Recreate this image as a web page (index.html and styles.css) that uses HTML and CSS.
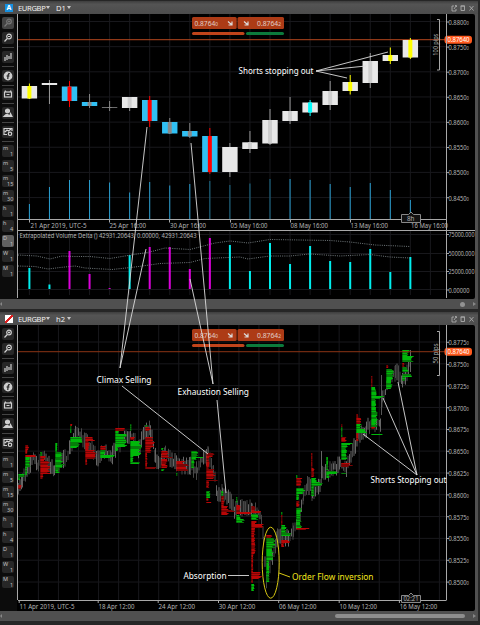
FILE: index.html
```html
<!DOCTYPE html>
<html lang="en">

<head>
    <meta charset="UTF-8">
    <title>EURGBP</title>
    <link rel="stylesheet" href="styles.css">
</head>

<body>
    <div class="wrapper">
        <div class="panel">
            <div class="header">
                <span class="logo">A</span>
                <span class="symbol">EURGBP</span>
                <span class="caret"></span>
                <span class="period">D1</span>
                <span class="caret"></span>
                <svg class="win" viewBox="0 0 24 8">
                    <path d="M3 2H1v5h4V5M3 5l2-3M4 1.500h1.500V3" />
                    <path d="M10 2h3.500v4.500H10zM9.600 2h4.300" />
                    <path d="M18.500 2l4 4.500M22.500 2l-4 4.500" />
                </svg>
            </div>
            <div class="main">
                <div class="tools" data-active="D1" data-dim="1"></div>
                <svg class="chart" id="day" viewBox="17 14 458 285"></svg>
            </div>
            <div class="scroll">
                <span class="left"></span>
                <span class="dot"></span>
                <span class="right"></span>
            </div>
        </div>
        <div class="panel second">
            <div class="header">
                <span class="logo slash"></span>
                <span class="symbol">EURGBP</span>
                <span class="caret"></span>
                <span class="period">h2</span>
                <span class="caret"></span>
                <svg class="win" viewBox="0 0 24 8">
                    <path d="M3 2H1v5h4V5M3 5l2-3M4 1.500h1.500V3" />
                    <path d="M10 2h3.500v4.500H10zM9.600 2h4.300" />
                    <path d="M18.500 2l4 4.500M22.500 2l-4 4.500" />
                </svg>
            </div>
            <div class="main">
                <div class="tools"></div>
                <svg class="chart" id="hours" viewBox="17 325 458 286"></svg>
            </div>
            <div class="scroll">
                <span class="left"></span>
                <span class="thumb"></span>
                <span class="right"></span>
            </div>
        </div>
        <svg class="notes" id="notes" viewBox="0 0 480 625"></svg>
    </div>
    <script src="chart.js"></script>
</body>

</html>
```

FILE: styles.css
```css
* {
    box-sizing: border-box;
}

body {
    margin: 0px;
    background: #262626;
    font-family: "Noto Sans", "Open Sans", sans-serif;
}

.wrapper {
    position: relative;
    width: 480px;
    height: 625px;
    padding-top: 1px;
    overflow: hidden;
    background: #262626;
}

.panel {
    display: flex;
    flex-direction: column;
    width: 478px;
    height: 308px;
    background: #505050;
}

.second {
    height: 309px;
    margin-top: 3px;
}

.header {
    display: flex;
    align-items: center;
    height: 13px;
    padding: 0 3px 0 5px;
    background: linear-gradient(#3e3e3e, #545454 25%, #4c4c4c);
    color: #f0f0f0;
    font-size: 7.6px;
    line-height: 12px;
}

.logo {
    width: 8px;
    height: 8px;
    margin-right: 5px;
    background: #1690e0;
    color: #fff;
    font-size: 7px;
    font-weight: bold;
    line-height: 8px;
    text-align: center;
}

.slash {
    background: linear-gradient(135deg, #fff 42%, #e02020 42%, #e02020 58%, #fff 58%);
}

.symbol {
    width: 26px;
    letter-spacing: -0.35px;
}

.period {
    width: 9px;
}

.caret {
    margin: 0 6px 0 2px;
    border: 2px solid transparent;
    border-top: 3px solid #c8c8c8;
    border-bottom: 0;
}

.win {
    width: 24px;
    height: 8px;
    margin-left: auto;
    fill: none;
    stroke: #aaa;
    stroke-width: 0.9;
}

.main {
    display: flex;
    flex: 1;
    min-height: 0;
}

.tools {
    display: flex;
    flex-direction: column;
    width: 17px;
    padding: 3px 0 0 2px;
    background: #0c0c0c;
}

.btn {
    flex: none;
    width: 12px;
    height: 12px;
    margin-bottom: 3px;
    border-radius: 2px;
    background: #272727;
    fill: none;
    stroke: #cfcfcf;
    stroke-width: 1.2;
}

.btn text {
    fill: #c4c4c4;
    stroke: none;
    font-size: 5.5px;
}

.btn.on {
    background: #606060;
}

.btn.dim {
    background: #444;
    stroke: #777;
}

.sep {
    flex: none;
    width: 12px;
    height: 0.8px;
    margin-bottom: 3px;
    background: #444;
}

.chart {
    display: block;
    width: 458px;
    height: 100%;
    background: #000;
    border-radius: 0 2px 2px 0;
}

.scroll {
    display: flex;
    align-items: center;
    justify-content: flex-end;
    height: 10px;
    padding-right: 2px;
    background: #505050;
}

.left,
.right {
    border: 2px solid transparent;
}

.left {
    margin-right: auto;
    border-right: 2.5px solid #888;
    border-left: 0;
}

.right {
    border-left: 3px solid #888;
    border-right: 0;
}

.dot {
    width: 5px;
    height: 5px;
    margin-right: 8px;
    border-radius: 50%;
    background: #929292;
}

.thumb {
    width: 130px;
    height: 4px;
    margin-right: 8px;
    border-radius: 2px;
    background: #8e8e8e;
}

.notes {
    position: absolute;
    top: 0;
    left: 0;
    width: 480px;
    height: 625px;
    pointer-events: none;
}

.label {
    fill: #b4b4b4;
    font-size: 7px;
}

.price {
    fill: #e0cfc8;
    font-size: 7px;
}

.last {
    font-size: 5px;
}

.note {
    fill: #fff;
    font-size: 9px;
}

.note.yellow {
    fill: #f2e61c;
}

.grid {
    stroke: #18181c;
}

.axis {
    stroke: #a8a8a8;
    fill: none;
}

.dots {
    fill: none;
    stroke: #8d979b;
    stroke-dasharray: 1 1.2;
    stroke-width: 0.8;
}

.lines {
    fill: none;
    stroke: #dcdcdc;
    stroke-width: 0.9;
}
```

FILE: chart.js
```javascript
var NS = 'http://www.w3.org/2000/svg';

function add(parent, tag, attrs, text) {
    var el = document.createElementNS(NS, tag);
    for (var k in attrs) {
        el.setAttribute(k, attrs[k]);
    }
    if (text) el.textContent = text;
    parent.appendChild(el);
    return el;
}
function rect(p, x, y, w, h, fill, rx) {
    return add(p, 'rect', { x: x, y: y, width: w, height: h, fill: fill, rx: rx || 0 });
}
function path(p, d, cls) {
    return add(p, 'path', { d: d, 'class': cls });
}
function text(p, x, y, s, cls, len) {
    var a = { x: x, y: y, 'class': cls };
    if (len) {
        a.textLength = len;
        a.lengthAdjust = 'spacingAndGlyphs';
    }
    return add(p, 'text', a, s);
}
// price with a small last digit
function pipText(p, x, y, s, last, cls, len) {
    var t = text(p, x, y, s, cls, len);
    add(t, 'tspan', { 'class': 'last' }, last);
}

// toolbar buttons
var zoomIcon = '<circle cx="7" cy="4.5" r="2.3"/><path d="M5.3 6.5L2.5 9.5M6 4.5h2"/>';
var icons = [
    zoomIcon + '<path d="M7 3.5v2"/>',
    zoomIcon,
    '|<path d="M3 6v4M5 4v5M7 5v3M9 2v6"/>',
    '|<circle cx="6" cy="6" r="3.8" fill="#cfcfcf"/><path stroke="#222" d="M7.8 3.8C6 3.3 6 4.5 5.8 9M4.5 6h3"/>',
    '|<rect x="2.5" y="4" width="7" height="5"/><path d="M3 2.500l1 1.500M9 2.500L8 4M4.500 6.500h3"/>',
    '|<circle cx="5.5" cy="4" r="2" fill="#cfcfcf"/><path fill="#cfcfcf" d="M2 9.500l2-2h2l1 2zM7.500 9.500l1-3 1.500 3z"/>',
    '|<path d="M10 5V2.500H2v6h3M3 6l2-2 1.500 1L9 3"/><circle cx="8" cy="7.8" r="1.7"/>',
    '|m1', 'm5', 'm15', 'm30', 'h1', 'h4', 'D1', 'W1', 'M1'
];
document.querySelectorAll('.tools').forEach(function (box) {
    icons.forEach(function (ic, i) {
        if (ic[0] == '|') {
            var s = document.createElement('div');
            s.className = 'sep';
            box.appendChild(s);
            ic = ic.slice(1);
        }
        var b = add(box, 'svg', { viewBox: '0 0 12 12', 'class': 'btn' });
        if (ic[0] == '<') {
            b.innerHTML = ic;
        } else {
            text(b, 1, 5, ic[0], '');
            text(b, 8 - (ic.length - 2) * 3, 10.5, ic.slice(1), '');
        }
        if (ic == box.dataset.active) b.classList.add('on');
        if (i == 0 && box.dataset.dim) b.classList.add('dim');
    });
});

function axisLabel(p, y, s) {
    path(p, 'M446 ' + y + 'h3', 'axis');
    pipText(p, 448.5, y + 2.8, s, '0', 'label', 20.5);
}

// sell / buy boxes, orange price line and pip scale
function quote(p, dy, lineY, pips, bottom, lineColor) {
    rect(p, 18, lineY - 0.5, 428, 1, lineColor);
    rect(p, 444.5, lineY - 4, 27.5, 8, '#ff5a1e', 3);
    text(p, 447.5, lineY + 2.7, '0.87640', 'price', 22).style.fill = '#fff';
    rect(p, 192, 17 + dy, 44.7, 12, '#ad3b16', 1.5);
    rect(p, 237.5, 17 + dy, 46.5, 12, '#ad3b16', 1.5);
    pipText(p, 194.5, 25.5 + dy, '0.8764', '0', 'price', 23.5);
    pipText(p, 257, 25.5 + dy, '0.8764', '2', 'price', 24);
    [228, 244].forEach(function (x) {
        var a = path(p, 'M' + x + ' ' + (21.5 + dy) + 'l3.5 3M' + (x + 4) + ' ' + (21.5 + dy) + 'v3.5h-3.5', 'lines');
        a.style.strokeWidth = 1.2;
    });
    rect(p, 192, 32 + dy, 52.5, 3, '#c0441b', 1.5);
    rect(p, 246, 32 + dy, 38, 3, '#0b7a3c', 1.5);
    var top = 19.5 + dy;
    path(p, 'M437 ' + top + 'h2.5V' + bottom + 'h-2.5', 'axis');
    var ty = (top + bottom) / 2 + (pips == '100 pips' ? 11 : 10);
    var t = text(p, 0, 0, pips, 'label', pips == '100 pips' ? 22 : 20);
    t.setAttribute('transform', 'translate(437.5 ' + ty + ') rotate(-90)');
}

function timeTag(p, y, h, s, x, len) {
    add(p, 'path', {
        d: 'M401.5 ' + y + 'h7l2.5-2.5 2.5 2.5h7v' + h + 'h-19z',
        fill: '#111', stroke: '#999', 'stroke-width': 0.9
    });
    text(p, x, y + h - 1.5, s, 'label', len);
}

// ---- daily chart ----
var day = document.getElementById('day');
var STEP = 20.05;
var i, x;
for (i = 0; i < 21; i++) {
    path(day, 'M' + (29.4 + i * STEP) + ' 14V219M' + (29.4 + i * STEP) + ' 231V295', 'grid');
}
for (i = 0; i < 8; i++) {
    path(day, 'M18 ' + (21.5 + i * 25.15) + 'H446', 'grid');
}
[234.5, 253.5, 271.5, 289.5].forEach(function (y) {
    path(day, 'M18 ' + y + 'H446', 'grid');
});

// body top, body bottom, high, low, body, core, volume top, delta top, delta color
var W = '#e8e8e8', B = '#30c0f4', G = '#888', L = '#cfcfcf', C = '#00eeee', M = '#dc00dc';
var candles = [
    [86, 98.5, 83.5, 99, W, '#ff0', 204, 268, C],
    [83, 85, 80, 104, W, W, 187, 284.5, C],
    [86.5, 101, 81, 107, B, '#f00', 180, 251, M],
    [102, 106, 94, 108, B, G, 180, 274, M],
    [107, 107.8, 101, 111, G, G, 182.5, 288, M],
    [97, 108, 97, 111, W, L, 192.5, 255, C],
    [100, 121, 96, 127, B, '#f00', 182, 247, M],
    [122, 133.5, 118, 134, B, G, 185.5, 247, M],
    [131, 136.5, 123, 138, B, G, 184, 269, M],
    [136, 172, 128, 174, B, '#f00', 181, 238, M],
    [147, 172, 143, 177, W, W, 185, 245, C],
    [142.3, 149, 131, 153, W, L, 183.5, 271, C],
    [120, 143.5, 109, 145, W, L, 179, 243, C],
    [111, 121, 97, 124, W, L, 179, 264, C],
    [102.5, 112.5, 100, 116, W, '#0ff', 180, 246, C],
    [91, 105, 81, 110, W, L, 184, 261, C],
    [82, 91, 75, 94.5, W, '#ff0', 187, 262, C],
    [61, 83, 53, 88, W, L, 183, 249, C],
    [55, 61, 47.5, 64, W, '#ff0', 190, 272, C],
    [40, 57.5, 38, 59, W, '#ff0', 200, 257, C]
];
quote(day, 0, 39.7, '100 pips', 70, '#b5471f');
candles.forEach(function (c, n) {
    x = 29.4 + n * STEP;
    rect(day, x - 0.5, c[6], 1, 219 - c[6], n > 8 && n < 13 ? '#1d708f' : '#2ba0d2');
    var wick = c[5] == L || c[5] == W ? '#999' : c[5];
    rect(day, x - 0.5, c[2], 1, c[3] - c[2], wick);
    rect(day, x - 7.7, c[0], 15.4, c[1] - c[0], c[4]);
    rect(day, x - 2, c[0], 4, c[1] - c[0], c[5]);
    rect(day, x - 1, c[7], 2, 289 - c[7], c[8]);
});
path(day, 'M18 219.5H446.5M18 230.5H475M446.5 14V298M17.5 14V298', 'axis');
['0.8800', '0.8750', '0.8700', '0.8650', '0.8600', '0.8550', '0.8500', '0.8450'].forEach(function (s, n) {
    axisLabel(day, 22 + n * 25.1, s);
});
[['75000.000', 234.5, 26], ['50000.000', 253.5, 26], ['25000.000', 271.5, 26], ['0.00000', 290, 21]].forEach(function (a) {
    path(day, 'M446 ' + a[1] + 'h3', 'axis');
    text(day, 448.5, a[1] + 2.5, a[0], 'label', a[2]);
});
[[30.5, '21 Apr 2019, UTC-5', 56], [109.5, '25 Apr 16:00', 36.5], [170, '30 Apr 16:00', 36], [230.5, '05 May 16:00', 37],
    [290.5, '08 May 16:00', 37.5], [350.5, '13 May 16:00', 37.5], [411, '16 May 16:00', 37]].forEach(function (a, n) {
    path(day, 'M' + [29.5, 109.5, 169.5, 230.5, 290.5, 350.5, 411][n] + ' 220v2.5', 'axis');
    text(day, a[0], 228, a[1], 'label', a[2]);
});
text(day, 19.5, 238, 'Extrapolated Volume Delta () 42931.20643, 0.00000, 42931.20643', 'label', 177);
path(day, 'M18 255L37 256 50 259 62 256 75 256.5 90 256.5 110 258.5 125 256 150 252 165 248 190 249.5 215 243 230 241 248 243 270 239.5 330 240.5 350 242 375 245 410 246.5', 'dots');
path(day, 'M18 266L35 266.5 48 269 60 267.5 75 266 85 268 112 269.5 135 267 160 263.5 190 262.5 205 258.5 240 257 248 259 270 256 290 256 310 254 340 256 370 254.5 390 257 410 258', 'dots');
timeTag(day, 214.5, 8, '8h', 407, 7.5);

// ---- 2 hour chart ----
var hours = document.getElementById('hours');
for (i = 0; i < 21; i++) {
    path(hours, 'M' + (38.4 + i * STEP) + ' 325V600', 'grid');
}
for (i = 0; i < 12; i++) {
    path(hours, 'M18 ' + (342 + i * 21.82) + 'H446', 'grid');
}
var seed = 7;
function rnd() {
    seed = (seed * 16807) % 2147483647;
    return seed / 2147483647;
}

// price bars
var price = [[18, 485], [22, 480], [27, 470], [33, 457], [38, 466], [44, 455], [50, 468], [54, 470], [60, 460], [66, 458],
    [70, 445], [75, 435], [78, 432], [84, 440], [90, 448], [98, 458], [104, 452], [112, 455], [118, 445], [124, 436],
    [130, 434], [138, 450], [143, 433], [150, 430], [155, 455], [158, 465], [165, 455], [170, 460], [180, 466], [190, 466],
    [197, 471], [203, 456], [208, 456], [213, 470], [217, 493], [222, 491], [228, 497], [234, 510], [245, 507], [252, 510],
    [258, 513], [261, 520], [263, 540], [266, 580], [268, 568], [272, 556], [277, 538], [282, 535], [288, 540], [293, 530],
    [298, 520], [303, 498], [307, 483], [312, 492], [318, 487], [322, 475], [328, 473], [333, 467], [340, 465], [346, 469],
    [352, 452], [358, 436], [366, 428], [373, 424], [380, 422], [382, 398], [390, 380], [395, 371], [402, 380], [408, 370], [410, 357]];
for (i = 0; i < price.length - 1; i++) {
    var a = price[i], b = price[i + 1];
    for (x = a[0]; x < b[0]; x += 1.5) {
        var y = a[1] + (b[1] - a[1]) * (x - a[0]) / (b[0] - a[0]);
        var up = 2 + rnd() * 8, down = 2 + rnd() * 8;
        rect(hours, x, y - up, 1, up + down, rnd() > 0.5 ? '#666' : '#474747');
    }
}
rect(hours, 321, 451, 1, 27, '#666');
rect(hours, 381, 375, 1, 40, '#555');
rect(hours, 410, 350, 1, 22, '#666');

// volume profiles: x, then [from, to, color, width]
var profiles = [
    [18, [474, 477, 'g', 7], [477, 480, 'g', 2], [485, 489, 'r', 3]],
    [25, [445, 450, 'r', 4], [450, 454, 'r', 2], [455, 457, 'r', 12], [457, 467, 'g', 5], [467, 475, 'g', 2]],
    [40, [452, 456, 'g', 2], [456, 461, 'r', 5], [461, 474, 'r', 10], [474, 479, 'r', 3]],
    [55, [443, 452, 'g', 2], [452, 464, 'g', 7], [464, 468, 'g', 9], [468, 473, 'g', 4]],
    [70, [424, 426, 'r', 2], [426, 433, 'g', 1], [437, 443, 'g', 12], [443, 448, 'g', 9]],
    [85, [437, 441, 'r', 10], [441, 450, 'r', 4], [450, 459, 'r', 11], [459, 465, 'r', 2]],
    [100, [446, 450, 'r', 6], [450, 455, 'g', 5], [455, 458, 'g', 14]],
    [115, [428, 431, 'r', 11], [431, 434, 'g', 4], [434, 447, 'g', 11], [447, 451, 'g', 3]],
    [130, [424, 431, 'g', 1], [437, 440, 'r', 5], [441, 456, 'g', 11], [456, 462, 'g', 3], [462, 464, 'g', 9]],
    [145, [425, 427, 'g', 2], [427, 431, 'r', 5], [437, 447, 'r', 9], [447, 453, 'r', 6], [453, 467, 'r', 2], [467, 469, 'r', 13]],
    [161, [448, 450, 'g', 2], [451, 457, 'r', 7], [457, 458, 'r', 13], [459, 468, 'r', 6], [469, 471, 'g', 3]],
    [176, [461, 464, 'r', 8], [464, 471, 'r', 12], [473, 476, 'g', 1]],
    [191, [451, 457, 'g', 7], [457, 458, 'g', 13], [458, 460, 'g', 6], [460, 468, 'g', 3]],
    [206, [453, 457, 'r', 8], [457, 469, 'r', 3], [469, 479, 'r', 9], [480, 481, 'r', 13], [481, 488, 'r', 3], [491, 498, 'g', 4], [498, 501, 'r', 2], [502, 503, 'r', 6]],
    [221, [491, 496, 'g', 2], [496, 506, 'r', 3], [506, 510, 'r', 7], [510, 512, 'r', 13], [512, 515, 'r', 7]],
    [236, [497, 503, 'g', 1], [505, 512, 'r', 4], [512, 514, 'r', 15], [515, 519, 'g', 4], [519, 523, 'g', 8]],
    [251, [506, 511, 'r', 4], [511, 513, 'r', 10], [514, 520, 'g', 7], [521, 524, 'r', 5], [524, 528, 'r', 13], [528, 540, 'r', 4], [540, 554, 'r', 4], [554, 572, 'r', 2], [572, 579, 'r', 9], [576, 577, 'r', 11], [579, 583, 'r', 2], [584, 591, 'g', 3]],
    [266, [535, 538, 'r', 6], [538, 548, 'g', 9], [548, 560, 'g', 7], [560, 571, 'g', 3], [571, 582, 'g', 3]],
    [281, [512, 515, 'g', 1], [515, 525, 'r', 1], [525, 533, 'g', 5], [533, 536, 'g', 11], [540, 543, 'r', 8], [543, 547, 'r', 3]],
    [296, [475, 478, 'g', 1], [478, 486, 'r', 6], [488, 494, 'g', 9], [494, 500, 'g', 3], [501, 507, 'r', 3], [508, 510, 'g', 7], [510, 526, 'g', 5], [526, 528, 'g', 6], [528, 530, 'r', 13]],
    [311, [453, 468, 'r', 1], [468, 477, 'r', 3], [478, 482, 'g', 5], [482, 486, 'g', 11], [486, 496, 'g', 3]],
    [326, [457, 470, 'g', 2], [471, 474, 'g', 12], [474, 478, 'g', 3]],
    [341, [424, 427, 'r', 1], [427, 437, 'g', 1], [437, 442, 'r', 5], [443, 445, 'g', 11], [445, 453, 'g', 6], [453, 460, 'g', 6], [463, 467, 'r', 9], [465, 466, 'r', 13], [473, 474, 'g', 5]],
    [356, [414, 418, 'r', 2], [418, 424, 'r', 5], [424, 429, 'g', 5], [429, 433, 'g', 11], [433, 441, 'r', 2]],
    [371, [376, 387, 'r', 1], [387, 396, 'g', 5], [396, 399, 'g', 12], [399, 411, 'g', 5], [411, 427, 'g', 6], [427, 429, 'r', 4], [434, 435, 'g', 11]],
    [386, [365, 368, 'r', 2], [369, 379, 'g', 8], [379, 389, 'g', 6]],
    [402, [350, 356, 'g', 7], [356, 362, 'g', 11], [363, 367, 'r', 2], [367, 372, 'g', 6], [374, 377, 'g', 12], [377, 381, 'g', 3]]
];
profiles.forEach(function (p) {
    p.slice(1).forEach(function (s) {
        for (var y = s[0]; y < s[1]; y++) {
            var w = s[3] * (0.7 + rnd() * 0.35);
            var bright = rnd() > 0.45;
            var fill = s[2] == 'g' ? (bright ? '#00b80a' : '#067d0a') : (bright ? '#b80606' : '#7d0404');
            rect(hours, p[0] + 0.3, y, Math.max(1, w), 1, fill);
        }
    });
});
quote(hours, 312, 351.7, '50 pips', 375.5, '#8a3415');
path(hours, 'M18 600.5H446.5M446.5 325V600M17.5 325V600', 'axis');
['0.8775', '0.8750', '0.8725', '0.8700', '0.8675', '0.8650', '0.8625', '0.8600', '0.8575', '0.8550', '0.8525', '0.8500'].forEach(function (s, n) {
    axisLabel(hours, 342.3 + n * 21.8 + (n == 1 ? 0.5 : 0), s);
});
[[19.5, '11 Apr 2019, UTC-5', 55], [98.5, '18 Apr 12:00', 36], [158.5, '24 Apr 12:00', 36.5], [218.8, '30 Apr 12:00', 36.5],
    [279, '06 May 12:00', 37.5], [339.5, '10 May 12:00', 37.5], [399.7, '16 May 12:00', 37.5]].forEach(function (a) {
    path(hours, 'M' + (a[0] - 0.3) + ' 600v3', 'axis');
    text(hours, a[0], 608.5, a[1], 'label', a[2]);
});
timeTag(hours, 595.5, 7, '02:21', 403.5, 15);

// ---- annotations ----
var notes = document.getElementById('notes');
path(notes, 'M147 127L120 368L146 249M191 143L213 384L190 279', 'lines');
path(notes, 'M122 386L208 454M217 400L226 493', 'lines');
path(notes, 'M388 52L316 71L366 66M316 71L347 78', 'lines');
path(notes, 'M363 434L417 475L383 398M417 475L398 382', 'lines');
path(notes, 'M228 575.5H249', 'lines');
add(notes, 'ellipse', { cx: 270.7, cy: 562.7, rx: 8.5, ry: 35.5, fill: 'none', stroke: '#d8c814' });
add(notes, 'path', { d: 'M279 573L290 577', stroke: '#d8c814' });
text(notes, 238.5, 74, 'Shorts stopping out', 'note', 75);
text(notes, 96.5, 382.5, 'Climax Selling', 'note', 55);
text(notes, 177.5, 394.5, 'Exhaustion Selling', 'note', 71.5);
text(notes, 370.5, 483, 'Shorts Stopping out', 'note', 76);
text(notes, 183.5, 579, 'Absorption', 'note', 43);
text(notes, 292, 580, 'Order Flow inversion', 'note yellow', 81.5);
```
